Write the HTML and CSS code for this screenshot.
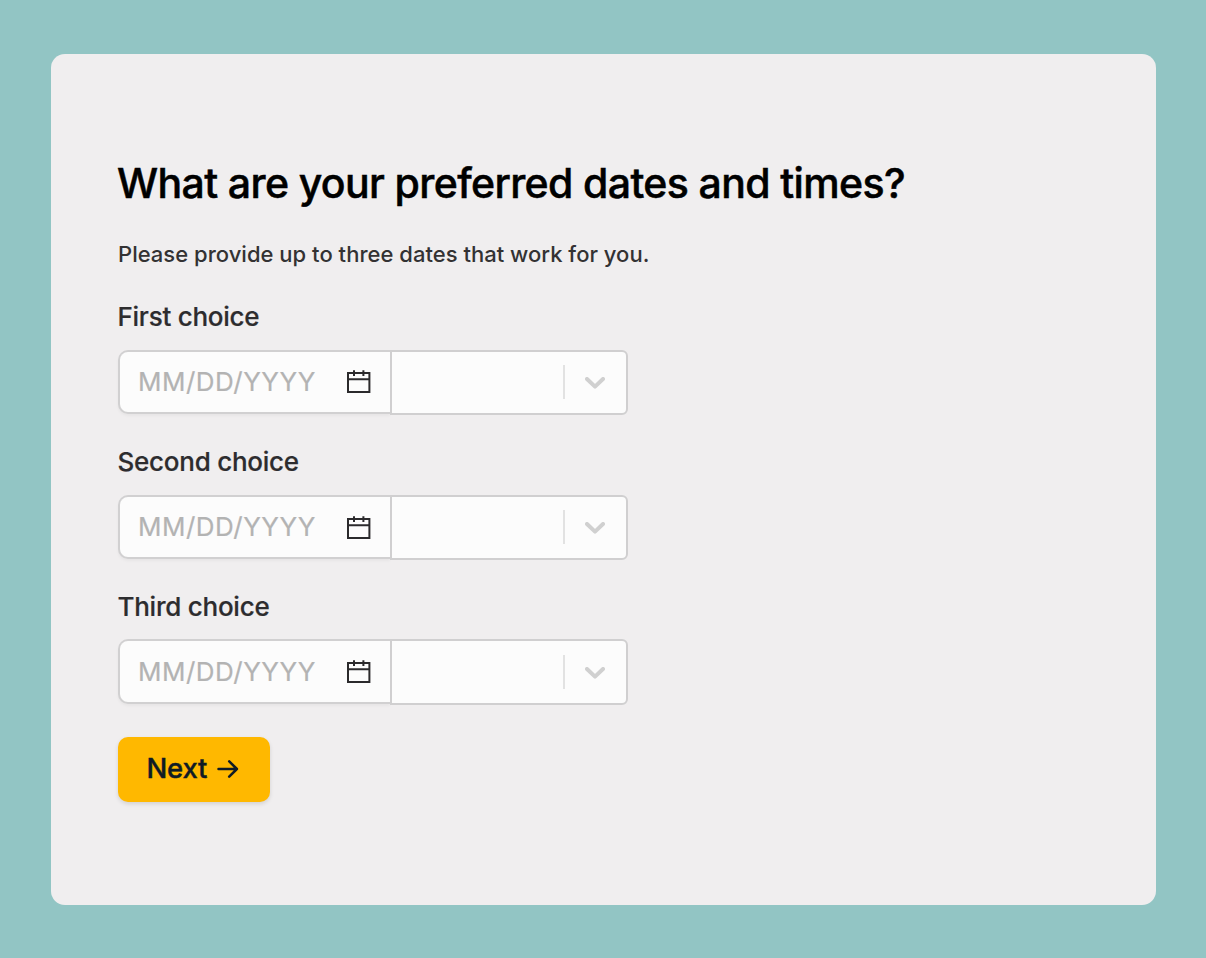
FILE: index.html
```html
<!DOCTYPE html>
<html lang="en">
<head>
<meta charset="utf-8">
<title>Preferred dates</title>
<link rel="stylesheet" href="styles.css">
</head>
<body>
<svg class="defs" width="0" height="0" aria-hidden="true">
<symbol id="calendar" viewBox="0 0 24 24"><path d="M1 3.1H22.4V22.1H1ZM1 9.3H22.4M7 0.3V5.9M16.4 0.3V5.9" fill="none" stroke="#2b2a2c" stroke-width="2"/></symbol>
<symbol id="chevron" viewBox="0 0 20 12"><path d="M2 2L10 9.6L18 2" fill="none" stroke="#d0d0d0" stroke-width="4" stroke-linecap="round" stroke-linejoin="round"/></symbol>
</svg>
<form class="card">
<h1 class="title">What are your preferred dates and times?</h1>
<p class="intro">Please provide up to three dates that work for you.</p>
<div class="choice"><div class="label">First choice</div>
<div class="fields"><div class="date"><span class="placeholder">MM/DD/YYYY</span><svg class="calendar"><use href="#calendar"/></svg></div><div class="select"><span class="divider"></span><svg class="chevron"><use href="#chevron"/></svg></div></div></div>
<div class="choice middle"><div class="label">Second choice</div>
<div class="fields"><div class="date"><span class="placeholder">MM/DD/YYYY</span><svg class="calendar"><use href="#calendar"/></svg></div><div class="select"><span class="divider"></span><svg class="chevron"><use href="#chevron"/></svg></div></div></div>
<div class="choice last"><div class="label">Third choice</div>
<div class="fields"><div class="date"><span class="placeholder">MM/DD/YYYY</span><svg class="calendar"><use href="#calendar"/></svg></div><div class="select"><span class="divider"></span><svg class="chevron"><use href="#chevron"/></svg></div></div></div>
<button class="next" type="button"><span class="next-label">Next</span><svg class="arrow" viewBox="0 0 22 20"><path d="M1.5 10H20M12.2 2.3L19.9 10L12.2 17.7" fill="none" stroke="#101b25" stroke-width="2.5" stroke-linecap="round" stroke-linejoin="round"/></svg></button>
</form>
</body>
</html>
```
FILE: styles.css
```css
* { box-sizing: border-box; }
body { margin: 0; height: 958px; padding: 54px 50px 53px 51px; background: #92c5c4; font-family: Inter, sans-serif; overflow: hidden; }
.defs { position: absolute; }
.card { height: 851px; padding: 104px 67px 0; border-radius: 14px; background: #f0eeef; }
.title { margin: 0 0 0 -1px; height: 52px; font-size: 41px; line-height: 51px; font-weight: 500; letter-spacing: -0.63px; -webkit-text-stroke: 0.5px #000; color: #000; white-space: nowrap; }
.intro { margin: 28px 0 0; height: 32px; font-size: 22px; line-height: 32px; font-weight: 500; letter-spacing: 0.02px; color: #333233; white-space: nowrap; }
.choice { height: 145px; padding-top: 29px; }
.label { height: 36px; margin-left: -0.5px; font-size: 26px; line-height: 36px; font-weight: 500; letter-spacing: -0.25px; -webkit-text-stroke: 0.2px #2d2c2e; color: #2d2c2e; }
.fields { display: flex; margin-top: 15px; }
.date { display: flex; align-items: center; width: 272px; height: 64px; padding: 0 18px; border: 2px solid #d1d0d1; border-right: 0; border-radius: 10px 0 0 10px; background: #fcfcfc; box-shadow: 0 2px 3px rgba(0,0,0,.04); }
.placeholder { width: 209px; padding-bottom: 2px; font-size: 26px; letter-spacing: 0.5px; -webkit-text-stroke: 0.2px #b3b3b3; color: #b3b3b3; white-space: nowrap; }
.calendar { width: 24px; height: 24px; }
.select { display: flex; align-items: center; justify-content: flex-end; width: 238px; height: 65px; padding-right: 21px; border: 2px solid #d0cfd0; border-radius: 0 6px 6px 0; background: #fcfcfc; }
.divider { width: 2px; height: 34px; margin: 0 20px 1px 0; background: #e2e2e2; }
.chevron { width: 20px; height: 12px; }
.middle .calendar { margin-top: 2px; }
.middle .chevron { margin-top: 1px; }
.last .fields { margin-top: 14px; }
.last .date { height: 65px; padding-top: 1px; }
.last .select { height: 66px; padding-top: 1px; }
.next { display: flex; align-items: center; width: 152px; height: 65px; margin: 32px 0 0; padding: 0 29px 2px; border: 0; border-radius: 10px; background: #ffb800; box-shadow: 0 2px 4px rgba(0,0,0,.12); font-family: Inter, sans-serif; color: #101b25; }
.next-label { width: 70px; margin-left: -0.5px; padding-bottom: 2px; font-size: 27.5px; font-weight: 500; letter-spacing: -0.2px; -webkit-text-stroke: 0.4px #101b25; text-align: left; }
.arrow { width: 22px; height: 20px; }
```
